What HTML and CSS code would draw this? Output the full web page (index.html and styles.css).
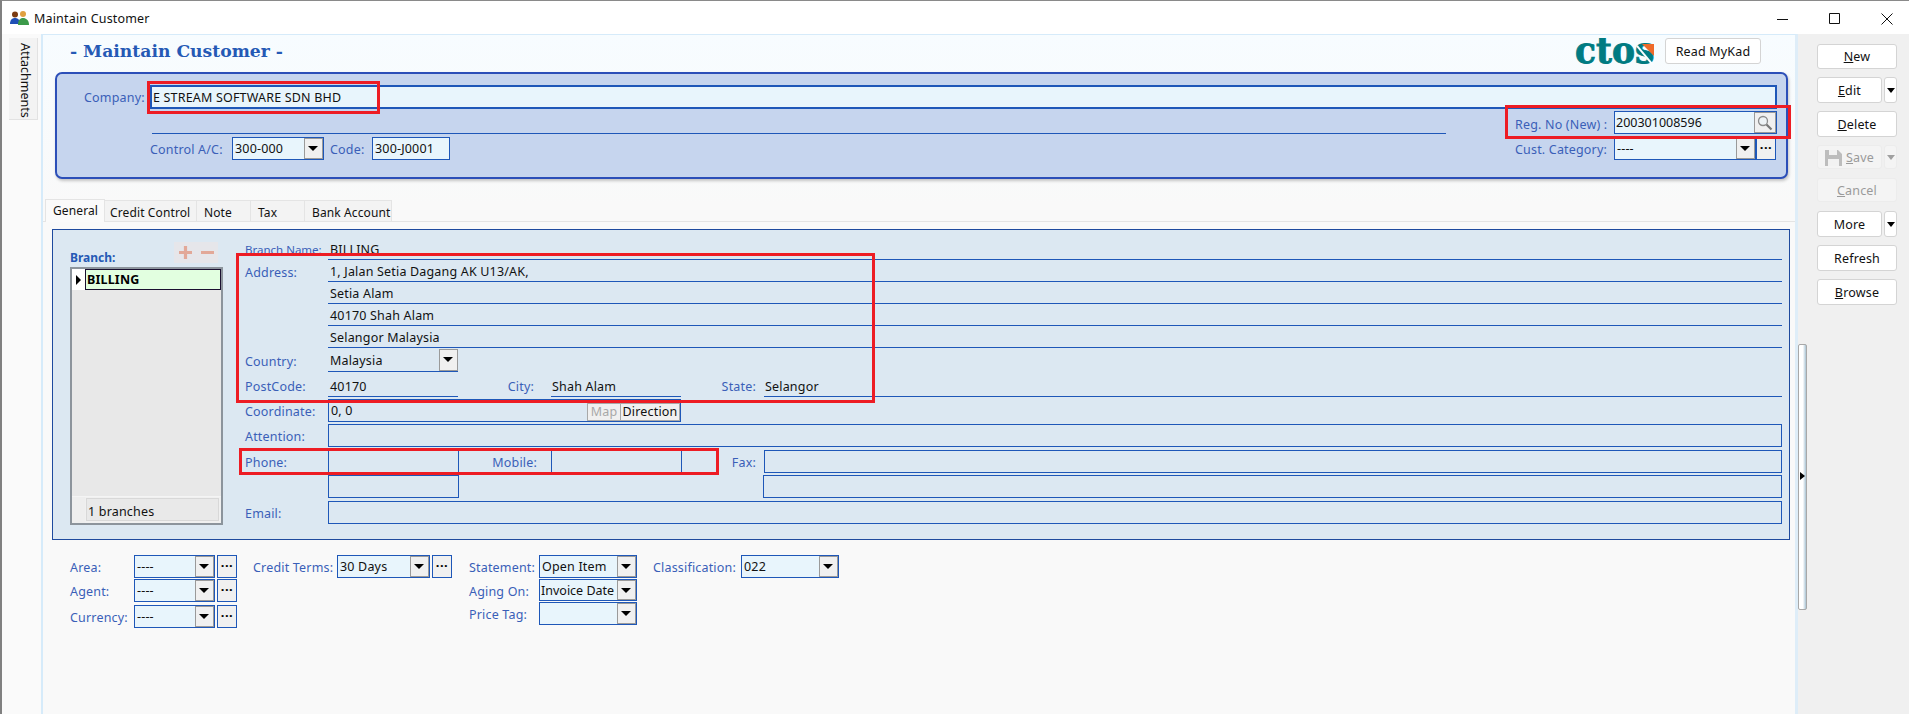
FILE: index.html
```html
<!DOCTYPE html>
<html lang="en">
<head>
  <meta charset="UTF-8">
  <title>Maintain Customer</title>
  <link rel="stylesheet" href="styles.css">
</head>
<body>
  <div class="window">
    <div class="titlebar">
      <svg class="app-icon" width="19" height="15" viewBox="0 0 19 15">
        <circle cx="5" cy="3.500" r="3" fill="#7a3b12"/>
        <path d="M0 13c0-4 2-6 5-6s5 2 5 6z" fill="#1f4fb5"/>
        <circle cx="13" cy="3" r="3" fill="#e0a040"/>
        <path d="M8 14c0-5 2-7 5-7s6 2 6 7z" fill="#3c9a4a"/>
      </svg>
      <span class="title-text">Maintain Customer</span>
      <div class="win-btns">
        <svg width="12" height="12" viewBox="0 0 12 12"><path d="M0 6.500h11" stroke="#111" fill="none"/></svg>
        <svg width="12" height="12" viewBox="0 0 12 12"><path d="M.5.5h10v10H.5z" stroke="#111" fill="none"/></svg>
        <svg width="12" height="12" viewBox="0 0 12 12"><path d="M.5.5l11 11M11.500.5l-11 11" stroke="#111" fill="none"/></svg>
      </div>
    </div>

    <div class="content">
      <div class="left-strip">
        <div class="side-tab">Attachments</div>
      </div>

      <div class="main">
        <div class="head">
          <h1>- Maintain Customer -</h1>
          <div class="head-right">
            <div class="ctos">cto<span class="ctos-s">s</span></div>
            <button class="btn mykad">Read MyKad</button>
          </div>
        </div>

        <div class="group">
          <div class="company-row">
            <span class="label company-label">Company:</span>
            <div class="company-input">E STREAM SOFTWARE SDN BHD</div>
          </div>
          <div class="group-lower">
            <div class="group-left">
              <span class="label w-control">Control A/C:</span>
              <div class="sel w-92"><span class="sel-text">300-000</span><span class="arrow"></span></div>
              <span class="label w-code">Code:</span>
              <div class="box w-78"><span class="sel-text">300-J0001</span></div>
            </div>
            <div class="group-right">
              <div class="right-row">
                <span class="label w-reg">Reg. No (New) :</span>
                <div class="sel w-163">
                  <span class="sel-text digits">200301008596</span>
                  <span class="search">
                    <svg width="16" height="16" viewBox="0 0 16 16">
                      <circle cx="6" cy="6" r="4.500" fill="#eef3f6" stroke="#8c8c8c" stroke-width="1.300"/>
                      <path d="M9.500 9.500l5 5" stroke="#777" stroke-width="2.200"/>
                    </svg>
                  </span>
                </div>
              </div>
              <div class="right-row">
                <span class="label w-reg">Cust. Category:</span>
                <div class="sel w-142"><span class="sel-text">----</span><span class="arrow"></span></div>
                <span class="dots">···</span>
              </div>
            </div>
          </div>
        </div>

        <div class="tabs">
          <div class="tab tab-on w-60">General</div>
          <div class="tab tab-credit w-92t">Credit Control</div>
          <div class="tab w-54">Note</div>
          <div class="tab w-54">Tax</div>
          <div class="tab w-87">Bank Account</div>
        </div>

        <div class="panel">
          <div class="branch-col">
            <div class="branch-head">
              <span class="branch-title">Branch:</span>
              <span class="plus-minus">
                <svg width="44" height="21" viewBox="0 0 44 21"><path d="M5 10.500h13M11.500 4v13M27 10.500h13" stroke="#e2a898" stroke-width="3.200" fill="none"/></svg>
              </span>
            </div>
            <div class="branch-list">
              <div class="branch-row">
                <span class="indicator"><span class="tri-right"></span></span>
                <span class="branch-cell">BILLING</span>
              </div>
              <div class="branch-foot">
                <span class="foot-gutter"></span>
                <span class="foot-cell">1 branches</span>
              </div>
            </div>
          </div>

          <div class="fields">
            <div class="frow"><span class="label flabel bname">Branch Name:</span><div class="line grow">BILLING</div></div>
            <div class="frow"><span class="label flabel addr">Address:</span><div class="line grow">1, Jalan Setia Dagang AK U13/AK,</div></div>
            <div class="frow"><span class="flabel"></span><div class="line grow">Setia Alam</div></div>
            <div class="frow"><span class="flabel"></span><div class="line grow">40170 Shah Alam</div></div>
            <div class="frow"><span class="flabel"></span><div class="line grow">Selangor Malaysia</div></div>
            <div class="frow">
              <span class="label flabel">Country:</span>
              <div class="line w-130 line-sel"><span class="sel-text-flat">Malaysia</span><span class="arrow"></span></div>
            </div>
            <div class="frow">
              <span class="label flabel">PostCode:</span>
              <div class="line w-130">40170</div>
              <span class="label w-city">City:</span>
              <div class="line w-130 pad-1">Shah Alam</div>
              <span class="label w-state">State:</span>
              <div class="line grow pad-1">Selangor</div>
            </div>
            <div class="frow">
              <span class="label flabel">Coordinate:</span>
              <div class="box w-353 coord">
                <span class="sel-text grow">0, 0</span>
                <span class="mini-btn map">Map</span>
                <span class="mini-btn direction">Direction</span>
              </div>
            </div>
            <div class="frow"><span class="label flabel">Attention:</span><div class="box grow"></div></div>
            <div class="frow">
              <span class="label flabel">Phone:</span>
              <div class="box w-131"></div>
              <span class="label w-mobile">Mobile:</span>
              <div class="box w-131"></div>
              <span class="label w-fax">Fax:</span>
              <div class="box grow"></div>
            </div>
            <div class="frow">
              <span class="flabel"></span>
              <div class="box w-131"></div>
              <span class="gap-fax2"></span>
              <div class="box grow"></div>
            </div>
            <div class="frow"><span class="label flabel">Email:</span><div class="box grow"></div></div>
          </div>
        </div>

        <div class="bottom">
          <div class="bcol bcol-1">
            <div class="brow"><span class="label w-64">Area:</span><div class="sel w-81"><span class="sel-text">----</span><span class="arrow"></span></div><span class="dots">···</span></div>
            <div class="brow"><span class="label w-64">Agent:</span><div class="sel w-81"><span class="sel-text">----</span><span class="arrow"></span></div><span class="dots">···</span></div>
            <div class="brow"><span class="label w-64">Currency:</span><div class="sel w-81"><span class="sel-text">----</span><span class="arrow"></span></div><span class="dots">···</span></div>
          </div>
          <div class="bcol bcol-2">
            <div class="brow"><span class="label w-84">Credit Terms:</span><div class="sel w-93"><span class="sel-text">30 Days</span><span class="arrow"></span></div><span class="dots">···</span></div>
          </div>
          <div class="bcol bcol-3">
            <div class="brow"><span class="label w-70">Statement:</span><div class="sel w-98"><span class="sel-text">Open Item</span><span class="arrow"></span></div></div>
            <div class="brow"><span class="label w-70">Aging On:</span><div class="sel w-98"><span class="sel-text tight">Invoice Date</span><span class="arrow"></span></div></div>
            <div class="brow"><span class="label w-70">Price Tag:</span><div class="sel w-98"><span class="sel-text"></span><span class="arrow"></span></div></div>
          </div>
          <div class="bcol bcol-4">
            <div class="brow"><span class="label w-88">Classification:</span><div class="sel w-98"><span class="sel-text">022</span><span class="arrow"></span></div></div>
          </div>
        </div>
      </div>

      <div class="splitter"><span class="split-arrow"></span></div>

      <div class="sidebar">
        <button class="btn act h-25"><u>N</u>ew</button>
        <div class="split-btn"><button class="btn act main-part"><u>E</u>dit</button><button class="btn drop"><span class="tri-down"></span></button></div>
        <button class="btn act"><u>D</u>elete</button>
        <div class="split-btn">
          <button class="btn act main-part off h-24">
            <svg width="17" height="17" viewBox="0 0 17 17"><path d="M0 1h13l4 4v12H0z" fill="#bdbdbd"/><path d="M4 1h8v5H4z" fill="#f2f2f2"/><path d="M3 10h11v7H3z" fill="#f2f2f2"/></svg>
            <span><u>S</u>ave</span>
          </button>
          <button class="btn drop off h-24"><span class="tri-down tri-off"></span></button>
        </div>
        <button class="btn act off cancel"><u>C</u>ancel</button>
        <div class="split-btn"><button class="btn act main-part">More</button><button class="btn drop"><span class="tri-down"></span></button></div>
        <button class="btn act">Refresh</button>
        <button class="btn act"><u>B</u>rowse</button>
      </div>
    </div>

    <!-- red marks drawn over the screenshot -->
    <div class="mark mark-company"></div>
    <div class="mark mark-reg"></div>
    <div class="mark mark-address"></div>
    <div class="mark mark-phone"></div>
  </div>
</body>
</html>
```

FILE: styles.css
```css
* {
  box-sizing: border-box;
}
html, body {
  margin: 0;
  padding: 0;
  overflow: hidden;
}
body {
  font-family: "Noto Sans", sans-serif;
  font-size: 12.5px;
  letter-spacing: .18px;
  color: #111;
  background: #fff;
}
.window {
  position: relative;
  width: 1909px;
  height: 714px;
  border-top: 1px solid #8a8a8a;
  border-left: 2px solid #808080;
  display: flex;
  flex-direction: column;
  overflow: hidden;
}

/* title bar */
.titlebar {
  height: 33px;
  flex: none;
  display: flex;
  align-items: center;
  padding: 1px 0 0 8px;
  background: #fff;
}
.app-icon {
  margin-right: 5px;
}
.win-btns {
  margin-left: auto;
  display: flex;
  gap: 40px;
  padding: 1px 16px 0 0;
}

.content {
  flex: 1;
  display: flex;
  min-height: 0;
}
.left-strip {
  width: 39px;
  flex: none;
  background: #fafafa;
  padding: 4px 0 0 7px;
}
.side-tab {
  writing-mode: vertical-rl;
  width: 29px;
  height: 82px;
  background: #f3f3f3;
  border-right: 1px solid #e2e2e2;
  border-bottom: 1px solid #e2e2e2;
  text-align: center;
  padding-top: 4px;
  line-height: 24px;
  letter-spacing: 0;
}

/* main area */
.main {
  width: 1757px;
  flex: none;
  background: linear-gradient(#f7fcff, #f9f9f9 170px);
  border-left: 2px solid #d6ebfa;
  border-top: 1px solid #d6ebfa;
  border-right: 3px solid #deedf8;
}
.head {
  height: 37px;
  display: flex;
  justify-content: space-between;
  padding: 3px 34px 0 27px;
}
h1 {
  margin: 0;
  font-family: "DejaVu Serif", serif;
  font-size: 17.200px;
  font-weight: bold;
  letter-spacing: 0;
  color: #2559b5;
  line-height: 22px;
  padding-top: 2px;
}
.head-right {
  display: flex;
  gap: 11px;
}
.ctos {
  font-family: "DejaVu Serif", serif;
  font-weight: bold;
  font-size: 34.500px;
  letter-spacing: 0;
  line-height: 26px;
  color: #007b82;
  -webkit-text-stroke: .8px #007b82;
  width: 79px;
  height: 26px;
  white-space: nowrap;
}
.ctos-s {
  position: relative;
}
.ctos-s::before {
  content: "";
  position: absolute;
  left: 9px;
  top: 12px;
  width: 2px;
  height: 25px;
  background: #fafdff;
  transform: rotate(-40deg);
}
.ctos-s::after {
  content: "";
  position: absolute;
  right: 0;
  top: 13px;
  border-top: 12px solid #ee6a2a;
  border-left: 12px solid transparent;
}
.btn {
  font-family: inherit;
  font-size: inherit;
  letter-spacing: inherit;
  color: #111;
  background: #fff;
  border: 1px solid #d4d4d4;
  border-radius: 3px;
  padding: 0;
}
.mykad {
  width: 96px;
  height: 26px;
}

.group {
  margin-left: 12px;
  width: 1733px;
  height: 107px;
  border: 2px solid #2c4fb8;
  border-radius: 7px;
  background: #c6d5ee;
  box-shadow: 1px 2px 3px #c4c4c4;
  padding-top: 11px;
  position: relative;
}
.label {
  color: #3a5fb8;
  flex: none;
  white-space: nowrap;
}
.company-row {
  display: flex;
  align-items: center;
  height: 24px;
  padding-left: 27px;
}
.company-label {
  width: 66px;
}
.company-input {
  width: 1627px;
  height: 24px;
  border: 2px solid #1e57b8;
  background: #e8f5fc;
  line-height: 21px;
  padding-left: 1px;
}
.group-lower {
  display: flex;
  height: 52px;
}
.group-left {
  margin: 24px 0 0 95px;
  width: 1294px;
  height: 28px;
  border-top: 1px solid #1e57b8;
  display: flex;
  align-items: flex-start;
  padding-top: 3px;
}
.w-control {
  width: 82px;
  line-height: 25px;
  margin-left: -2px;
}
.w-code {
  width: 42px;
  margin-left: 6px;
  line-height: 25px;
}
.group-right {
  margin-left: 69px;
  padding-top: 2px;
}
.right-row {
  display: flex;
  height: 23px;
  margin-bottom: 3px;
}
.w-reg {
  width: 99px;
  line-height: 27px;
}
.right-row + .right-row .w-reg {
  line-height: 26px;
}

.sel, .box {
  height: 23px;
  border: 1px solid #1e57b8;
  background: #e8f5fc;
  display: flex;
  flex: none;
  line-height: 21px;
}
.box {
  background: transparent;
}
.group .box {
  background: #e8f5fc;
}
.sel-text {
  flex: 1;
  padding-left: 2px;
  white-space: nowrap;
  overflow: hidden;
}
.digits {
  letter-spacing: 0;
  padding-left: 1px;
}
.tight {
  padding-left: 1px;
  letter-spacing: 0;
}
.arrow {
  width: 19px;
  flex: none;
  background: #f0f0f0;
  border: 1px solid #9a9a9a;
  position: relative;
}
.arrow::after {
  content: "";
  position: absolute;
  left: 3px;
  top: 7px;
  border-top: 5px solid #000;
  border-left: 5px solid transparent;
  border-right: 5px solid transparent;
}
.search {
  width: 22px;
  flex: none;
  background: #f0f0f0;
  border: 1px solid #9a9a9a;
  display: flex;
  align-items: center;
  justify-content: center;
}
.dots {
  width: 20px;
  height: 23px;
  flex: none;
  border: 1px solid #1e57b8;
  background: #f0f0f0;
  text-align: center;
  font-weight: bold;
  font-size: 13px;
  letter-spacing: .5px;
  line-height: 19px;
  color: #000;
  overflow: hidden;
}

.w-60 { width: 60px; }
.w-92t { width: 92px; }
.w-54 { width: 54px; }
.w-87 { width: 87px; }
.w-92 { width: 92px; }
.w-78 { width: 78px; }
.w-163 { width: 163px; }
.w-142 { width: 142px; }
.w-130 { width: 130px; }
.w-131 { width: 131px; }
.w-353 { width: 353px; }
.w-64 { width: 64px; }
.w-81 { width: 81px; }
.w-84 { width: 84px; }
.w-93 { width: 93px; }
.w-70 { width: 70px; }
.w-98 { width: 98px; }
.w-88 { width: 88px; }
.grow { flex: 1; }

/* tabs */
.tabs {
  display: flex;
  margin-top: 20px;
  height: 23px;
  padding-left: 2px;
  border-bottom: 1px solid #e4e4e4;
  align-items: flex-end;
}
.tab {
  height: 21px;
  background: #f3f3f3;
  border: 1px solid #e4e4e4;
  border-left: 0;
  border-bottom: 0;
  padding-left: 7px;
  font-size: 12px;
  letter-spacing: .12px;
  line-height: 23px;
  white-space: nowrap;
}
.tab-credit {
  padding-left: 5px;
}
.tab-on {
  height: 23px;
  background: #fafafa;
  border-left: 1px solid #e4e4e4;
  line-height: 21px;
  margin-bottom: -1px;
}

/* general panel */
.panel {
  margin: 7px 0 0 9px;
  width: 1738px;
  height: 311px;
  border: 1px solid #1e4a9e;
  background: #dce8f2;
  display: flex;
  padding-top: 7px;
}
.branch-col {
  width: 192px;
  flex: none;
  padding-left: 17px;
}
.branch-head {
  height: 30px;
  display: flex;
  justify-content: space-between;
  padding-right: 27px;
  position: relative;
}
.branch-title {
  font-weight: bold;
  font-size: 12px;
  letter-spacing: 0;
  color: #2559b5;
  padding-top: 12px;
}
.plus-minus {
  width: 44px;
  height: 21px;
  background: #e6e6ea;
  margin-top: 5px;
}
.branch-list {
  width: 153px;
  height: 258px;
  border: 2px solid #8c949c;
  background: #e8e8e8;
  display: flex;
  flex-direction: column;
  justify-content: space-between;
}
.branch-row {
  display: flex;
  height: 21px;
}
.indicator {
  width: 13px;
  background: #fff;
  display: flex;
  align-items: center;
  justify-content: center;
}
.tri-right {
  border-left: 5px solid #000;
  border-top: 5px solid transparent;
  border-bottom: 5px solid transparent;
}
.branch-cell {
  flex: 1;
  background: #e2ffe0;
  border: 1px solid #1a1030;
  font-weight: bold;
  color: #000;
  padding-left: 1px;
  line-height: 20px;
}
.branch-foot {
  height: 27px;
  display: flex;
  background: #f0f0f0;
  border-top: 1px solid #f4f4f4;
}
.foot-gutter {
  width: 13px;
  background: #eee;
}
.foot-cell {
  flex: 1;
  border: 1px solid #d8d8d8;
  margin: 1px 2px 2px 1px;
  background: #e9e9e9;
  padding-left: 1px;
  line-height: 26px;
}

.fields {
  width: 1537px;
  display: grid;
  grid-template-rows: 23px 22px 22px 22px 22px 24px 25px 25px 25px 26px 25px 26px;
}
.frow {
  display: flex;
  align-items: flex-end;
  min-width: 0;
}
.flabel {
  width: 83px;
  flex: none;
  line-height: 20px;
}
.bname {
  font-size: 11.500px;
  letter-spacing: 0;
}
.addr {
  line-height: 18px;
}
.line {
  height: 22px;
  border-bottom: 1px solid #1e57b8;
  padding-left: 2px;
  line-height: 24px;
  white-space: nowrap;
  overflow: hidden;
}
.pad-1 {
  padding-left: 1px;
}
.line-sel {
  display: flex;
  height: 23px;
  padding-right: 0;
  overflow: visible;
}
.sel-text-flat {
  flex: 1;
}
.w-city {
  width: 93px;
  text-align: right;
  padding-right: 17px;
  line-height: 20px;
}
.w-state {
  width: 83px;
  text-align: right;
  padding-right: 8px;
  line-height: 20px;
}
.w-mobile {
  width: 92px;
  text-align: right;
  padding-right: 14px;
  line-height: 20px;
}
.w-fax {
  width: 82px;
  text-align: right;
  padding-right: 8px;
  line-height: 20px;
}
.gap-fax2 {
  width: 304px;
  flex: none;
}
.coord {
  padding: 3px 0 0 0;
  line-height: 14px;
}
.coord .sel-text {
  margin-top: -3px;
  line-height: 22px;
}
.mini-btn {
  background: #f0f0f0;
  border: 1px solid #a8a8a8;
  color: #111;
  text-align: center;
  height: 18px;
  line-height: 16px;
  flex: none;
}
.map {
  color: #a8a8a8;
  width: 34px;
}
.direction {
  width: 59px;
  border-left: 0;
}

/* combos under the panel */
.bottom {
  display: flex;
  margin-top: 15px;
}
.bcol {
  display: flex;
  flex-direction: column;
}
.bcol-1 {
  margin-left: 27px;
  width: 183px;
}
.bcol-2 {
  width: 216px;
}
.bcol-3 {
  width: 184px;
}
.brow {
  display: flex;
  gap: 2px;
  height: 24px;
}
.brow:nth-child(2) {
  height: 26px;
}
.brow .label {
  margin-right: -2px;
  line-height: 26px;
}
.bcol-3 .brow {
  gap: 0;
  height: 24px;
}
.bcol-3 .brow:nth-child(2) {
  height: 23px;
}
.bcol-3 .brow:nth-child(2) .sel {
  height: 22px;
}
.bcol-3 .label {
  margin-right: 0;
}

/* splitter */
.splitter {
  width: 9px;
  height: 266px;
  flex: none;
  margin-top: 310px;
  background: linear-gradient(to right, #fff 55%, #a9c3d3);
  border: 1px solid #a8a8a8;
  border-radius: 2px;
  position: relative;
  z-index: 1;
}
.split-arrow {
  position: absolute;
  left: 1px;
  top: 127px;
  border-left: 5px solid #000;
  border-top: 4px solid transparent;
  border-bottom: 4px solid transparent;
}

/* action buttons */
.sidebar {
  flex: 1;
  background: #f0f0f0;
  margin-left: -9px;
  padding: 10px 0 0 19px;
  display: flex;
  flex-direction: column;
  gap: 8px;
}
.act {
  width: 80px;
  height: 26px;
  flex: none;
}
.h-25 {
  height: 25px;
}
.cancel {
  height: 24px;
  margin: 1px 0;
}
.split-btn {
  display: flex;
  gap: 2px;
  width: 80px;
}
.main-part {
  width: 65px;
}
.drop {
  width: 13px;
  height: 26px;
  display: flex;
  align-items: center;
  justify-content: center;
}
.main-part.h-24, .drop.h-24 {
  height: 24px;
}
.tri-down {
  border-top: 5px solid #000;
  border-left: 4.500px solid transparent;
  border-right: 4.500px solid transparent;
}
.tri-off {
  border-top-color: #a0a0a0;
}
.off {
  background: #f4f4f4;
  color: #9a9a9a;
  border-color: #ececec;
}
.main-part.off {
  display: flex;
  align-items: center;
  justify-content: center;
  gap: 4px;
}

/* red marks */
.mark {
  position: absolute;
  border: 3px solid #ed1c24;
  pointer-events: none;
}
.mark-company {
  left: 145px;
  top: 80px;
  width: 233px;
  height: 33px;
}
.mark-reg {
  left: 1503px;
  top: 104px;
  width: 286px;
  height: 34px;
}
.mark-address {
  left: 234px;
  top: 252px;
  width: 639px;
  height: 150px;
}
.mark-phone {
  left: 237px;
  top: 447px;
  width: 480px;
  height: 27px;
}
```
